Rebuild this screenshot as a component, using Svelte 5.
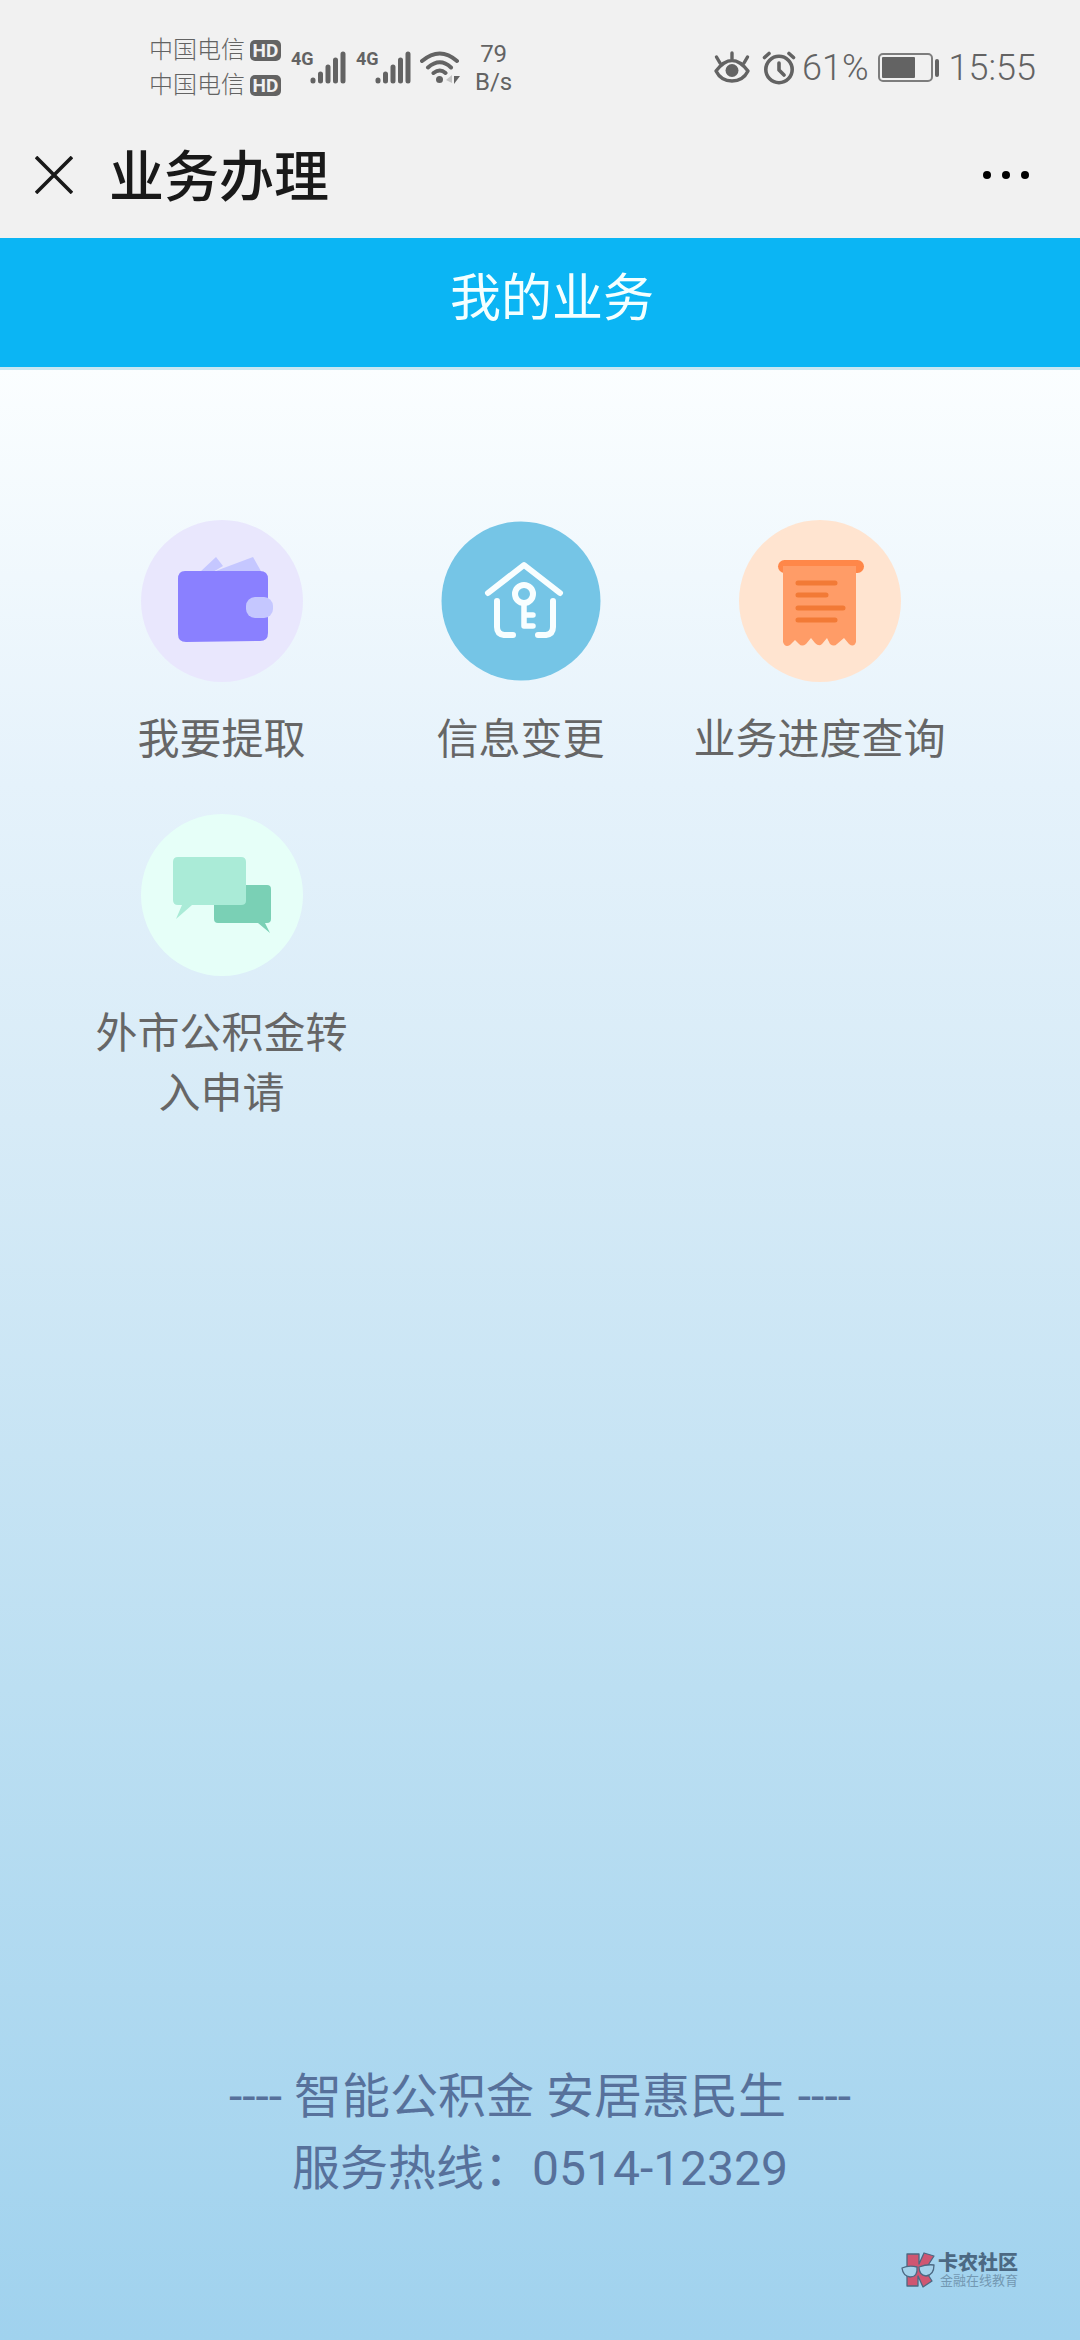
<script lang="ts">
  interface Service {
    icon: 'wallet' | 'house' | 'receipt' | 'chat';
    label: string;
  }

  const carriers = ['中国电信', '中国电信'];
  const networks = [0, 1];

  const services: Service[] = [
    { icon: 'wallet', label: '我要提取' },
    { icon: 'house', label: '信息变更' },
    { icon: 'receipt', label: '业务进度查询' },
    { icon: 'chat', label: '外市公积金转入申请' },
  ];
</script>

<div class="page">
  <div class="status">
    <div class="carriers">
      {#each carriers as name}
        <div class="carrier">
          <span>{name}</span>
          <span class="hd">HD</span>
        </div>
      {/each}
    </div>
    {#each networks as n (n)}
      <div class="signal">
        <span class="gen">4G</span>
        <svg width="36" height="34" viewBox="0 0 36 34" stroke="#636363" stroke-width="5" stroke-linecap="round">
          <path d="M3 29V30M10.500 23V30M18 16V30M25.500 9V30M33 3V30" />
        </svg>
      </div>
    {/each}
    <svg class="wifi" width="40" height="34" viewBox="0 0 40 34" fill="none" stroke="#636363" stroke-width="4" stroke-linecap="round">
      <path d="M2 10Q20-5 37 10M8 16.500Q20 6 31 16.500M13.500 22Q20 17 25.500 22" />
      <circle cx="19.500" cy="28.500" r="3.500" fill="#636363" stroke="none" />
      <path d="M32 24V32L26 29Z" fill="#c4c4c4" stroke="none" />
      <path d="M34 25H40L34 33Z" fill="#636363" stroke="none" />
    </svg>
    <div class="speed">
      <span>79</span>
      <span>B/s</span>
    </div>
    <div class="status-right">
      <svg width="36" height="34" viewBox="0 0 36 34" fill="none" stroke="#636363" stroke-width="3.400" stroke-linecap="round" stroke-linejoin="round">
        <path d="M2 20Q18-1 34 20Q29 30 18 30Q7 30 2 20ZM18 2V8M2.500 6L6 12M33.500 6L30 12" />
        <circle cx="18" cy="19.500" r="6.500" fill="#636363" stroke="none" />
      </svg>
      <svg class="alarm" width="34" height="34" viewBox="0 0 34 34" fill="none" stroke="#636363" stroke-width="3.600" stroke-linecap="round" stroke-linejoin="round">
        <circle cx="17" cy="18.500" r="13.200" />
        <path d="M17 12V19L22 24M2.500 6.500L7 2.500M31.500 6.500L27 2.500" />
      </svg>
      <span>61%</span>
      <svg class="battery" width="62" height="30" viewBox="0 0 62 30">
        <rect x="1" y="1" width="53" height="27" rx="4" fill="none" stroke="#7d7d7d" stroke-width="2" />
        <rect x="4" y="4" width="33" height="21" rx="1" fill="#636363" />
        <rect x="57" y="6" width="4" height="18" rx="2" fill="#636363" />
      </svg>
      <span>15:55</span>
    </div>
  </div>

  <header class="nav">
    <button class="nav-btn" aria-label="关闭">
      <svg width="38" height="38" viewBox="0 0 38 38" stroke="#191919" stroke-width="3.600">
        <path d="M1 1L37 37M37 1L1 37" />
      </svg>
    </button>
    <h1>业务办理</h1>
    <button class="nav-btn more" aria-label="更多">
      <svg width="48" height="10" viewBox="0 0 48 10" fill="#000">
        <circle cx="5" cy="5" r="4" />
        <circle cx="24" cy="5" r="4" />
        <circle cx="43" cy="5" r="4" />
      </svg>
    </button>
  </header>

  <main>
    <h2>我的业务</h2>

    <nav class="services">
      {#each services as service}
        <a class="service" href="#{service.icon}">
          <svg width="162" height="162" viewBox="0 0 162 162">
            {#if service.icon === 'wallet'}
              <circle cx="81" cy="81" r="81" fill="#e9e7fd" />
              <path d="M59 52L75 37L82 46L72 52ZM72 52L112 37L121 53Z" fill="#c5c7ff" />
              <path d="M44 51H119Q127 51 127 59V113Q127 121 119 121L45 122Q37 122 37 114V59Q37 51 44 51Z" fill="#8a80ff" />
              <rect x="105" y="77" width="27" height="21" rx="9" fill="#c5c7ff" />
            {:else if service.icon === 'house'}
              <circle cx="81" cy="81" r="79.500" fill="#75c5e6" />
              <g fill="none" stroke="#f8feff" stroke-width="6" stroke-linecap="round" stroke-linejoin="round">
                <path d="M48 73L84 45L120 73M57 81V107Q57 114 64 115H73M113 81V107Q113 114 106 115H98" />
                <circle cx="84" cy="74" r="9" />
                <path d="M84 84V106H93M84 95H93" stroke-width="5.500" />
              </g>
            {:else if service.icon === 'receipt'}
              <circle cx="81" cy="81" r="81" fill="#ffe4d0" />
              <rect x="39" y="40" width="86" height="13" rx="6.500" fill="#ff8749" />
              <path d="M44 46H117V122Q115 128 110 124L105 118L98 124Q95 127 91 124L88 118L83 124Q80 127 76 123L72 118L67 124Q63 127 60 124L56 120L51 125Q46 128 44 122Z" fill="#ff9c67" />
              <path d="M59 63H96M59 75H87M59 88H104M59 100H96" stroke="#f27a36" stroke-width="5" stroke-linecap="round" />
            {:else}
              <circle cx="81" cy="81" r="81" fill="#e6fff8" />
              <path d="M77 71H126Q130 71 130 75V105Q130 109 126 109H124L129 119L117 109H77Q73 109 73 105V75Q73 71 77 71Z" fill="#7ad0b5" />
              <path d="M37 43H100Q105 43 105 48V87Q105 91 100 91H51L35 105L41 91H37Q32 91 32 86V48Q32 43 37 43Z" fill="#aaebd7" />
            {/if}
          </svg>
          <span>{service.label}</span>
        </a>
      {/each}
    </nav>

    <footer>
      <p>---- 智能公积金 安居惠民生 ----</p>
      <p>服务热线：0514-12329</p>
    </footer>
  </main>

  <!-- Marca d'água -->
  <div class="watermark">
    <svg width="34" height="36" viewBox="0 0 34 36" stroke="#4c6983" stroke-width="1.300" stroke-linejoin="round">
      <path d="M6 2H18V12L23 1L33 4L24 18L31 29L22 35L17 24V34H6Z" fill="#cf5672" />
      <path d="M1 16Q8 13 16 15Q17 25 9 25Q2 24 1 16ZM18 15Q26 12 33 13Q33 23 25 24Q18 23 18 15Z" fill="#a4d2eb" />
    </svg>
    <div class="watermark-text">
      <strong>卡农社区</strong>
      <small>金融在线教育</small>
    </div>
  </div>
</div>

<style>
  :global(body) {
    margin: 0;
  }

  .page {
    position: relative;
    display: flex;
    flex-direction: column;
    min-height: 100vh;
    background: #f1f1f1;
    font-family: Roboto, "Noto Sans CJK SC", sans-serif;
  }

  h1,
  h2,
  p {
    margin: 0;
    font-weight: 400;
  }

  /* Status bar */
  .status {
    display: flex;
    align-items: center;
    height: 136px;
    padding: 0 44px 0 149px;
    color: #636363;
    font-weight: 300;
  }

  .carrier {
    display: flex;
    align-items: center;
    gap: 5px;
    height: 35px;
    font-size: 24px;
    line-height: 35px;
  }

  .hd {
    width: 31px;
    height: 21px;
    border-radius: 5px;
    background: #636363;
    color: #f1f1f1;
    font-size: 19px;
    font-weight: 700;
    line-height: 21px;
    text-align: center;
  }

  .signal {
    display: flex;
    align-items: flex-start;
    margin-left: 10px;
  }

  .gen {
    width: 19px;
    font-size: 18px;
    font-weight: 700;
    line-height: 16px;
  }

  .wifi {
    margin-left: 9px;
  }

  .speed {
    display: flex;
    flex-direction: column;
    margin-left: 15px;
    font-size: 24px;
    font-weight: 400;
    line-height: 28px;
    text-align: center;
  }

  .status-right {
    display: flex;
    align-items: center;
    margin-left: auto;
    font-size: 36px;
  }

  .alarm {
    margin: 0 6px 0 12px;
  }

  .battery {
    margin: 0 9px;
  }

  /* Title bar */
  .nav {
    display: flex;
    align-items: center;
    height: 102px;
    padding: 0 50px 24px 35px;
    box-sizing: border-box;
    color: #191919;
  }

  .nav h1 {
    padding-top: 4px;
    margin-left: 36px;
    font-size: 55px;
    font-weight: 500;
    line-height: 78px;
  }

  .nav-btn {
    display: flex;
    padding: 0;
    border: 0;
    background: none;
  }

  .more {
    margin-left: auto;
  }

  /* Content */
  main {
    flex: 1;
    display: flex;
    flex-direction: column;
    background: linear-gradient(#fbfeff 130px, #e5f2fb 26%, #d7ebf7 42%, #bcdff2 69%, #a0d2ee);
  }

  h2 {
    padding: 24px 0 32px 24px;
    border-bottom: 3px solid #c9e7f2;
    background: #0bb5f4;
    color: #f4ffff;
    font-size: 51px;
    line-height: 73px;
    text-align: center;
  }

  .services {
    display: grid;
    grid-template-columns: repeat(3, 1fr);
    row-gap: 44px;
    padding: 150px 111px 0 72px;
  }

  .service {
    display: flex;
    flex-direction: column;
    align-items: center;
    gap: 28px;
    padding: 0 20px;
    color: #666;
    font-size: 42px;
    line-height: 60px;
    text-align: center;
    text-decoration: none;
  }

  footer {
    margin-top: auto;
    padding-bottom: 135px;
    color: #57719b;
    font-size: 48px;
    line-height: 72px;
    text-align: center;
  }

  .watermark {
    position: absolute;
    right: 62px;
    bottom: 52px;
    display: flex;
    align-items: center;
    gap: 3px;
    color: #4c6983;
  }

  .watermark-text {
    display: flex;
    flex-direction: column;
  }

  .watermark strong {
    font-size: 20px;
    font-weight: 900;
    line-height: 21px;
  }

  .watermark small {
    color: #7398b2;
    font-size: 13px;
    line-height: 14px;
    text-align: right;
  }
</style>
